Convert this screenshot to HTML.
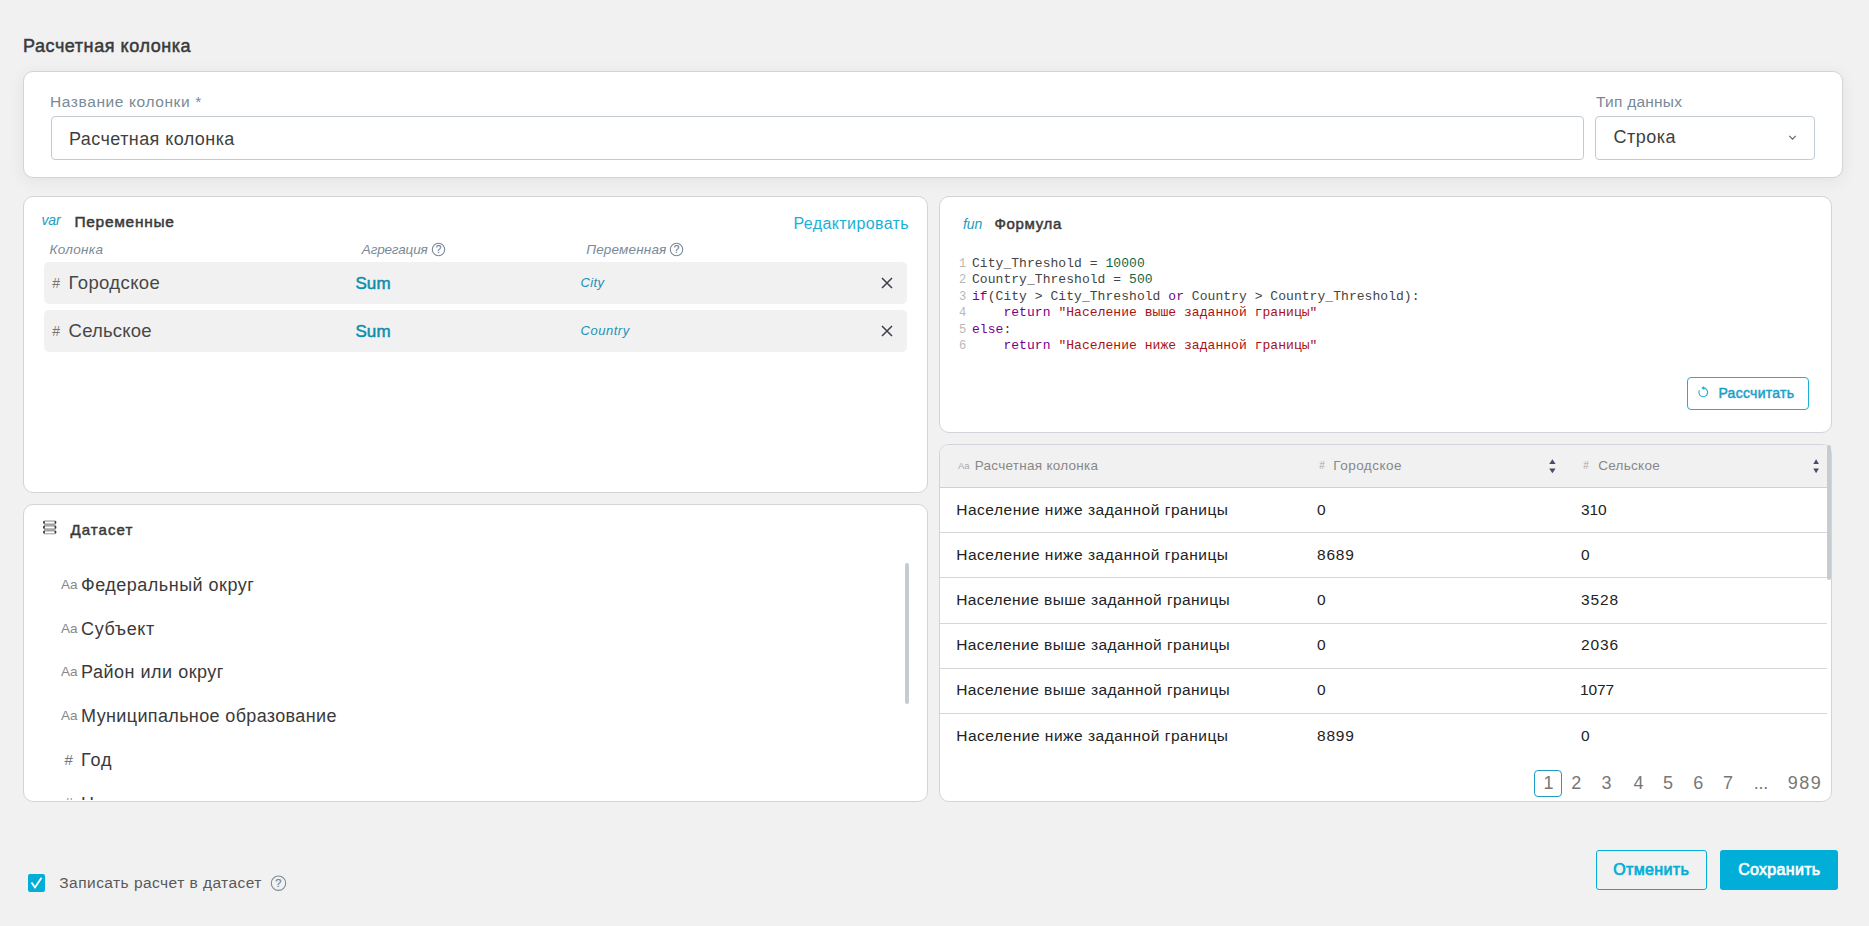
<!DOCTYPE html>
<html><head><meta charset="utf-8">
<style>
*{margin:0;padding:0;box-sizing:border-box}
html,body{width:1869px;height:926px;overflow:hidden;background:#f1f1f1;font-family:"Liberation Sans",sans-serif;color:#333}
.a{position:absolute}
.card{position:absolute;background:#fff;border:1px solid #d2d4d9;border-radius:10px}
.t{position:absolute;white-space:nowrap;line-height:1}
.row{position:absolute;left:44px;width:863px;height:42px;background:#f1f1f1;border-radius:5px}
.sep{position:absolute;left:940px;width:887px;height:1px;background:#d6d7dc}
.code{position:absolute;white-space:pre;line-height:1;font-family:"Liberation Mono",monospace;font-size:13px;color:#444;letter-spacing:.05px}
.ln{position:absolute;left:959px;white-space:pre;line-height:1;font-family:"Liberation Mono",monospace;font-size:12px;color:#b8b8b8}
.k{color:#770088}.n{color:#116644}.s{color:#aa1111}
svg{position:absolute;overflow:visible}
</style></head><body>

<!-- top card -->
<div class="card" style="left:23px;top:71px;width:1820px;height:107px;box-shadow:0 3px 16px rgba(30,40,60,.07)"></div>
<div class="a" style="left:51px;top:116px;width:1533px;height:44px;border:1px solid #c3cbd2;border-radius:4px;background:#fff"></div>
<div class="a" style="left:1595px;top:116px;width:220px;height:44px;border:1px solid #c3cbd2;border-radius:4px;background:#fff"></div>
<svg style="left:0;top:0" width="1" height="1"><path d="M1789.3 135.8 L1792.5 139.2 L1795.7 135.8" fill="none" stroke="#666" stroke-width="1.2"/></svg>

<!-- variables card -->
<div class="card" style="left:23px;top:196px;width:905px;height:297px"></div>
<div class="row" style="top:262px"></div>
<div class="row" style="top:310px"></div>
<svg style="left:0;top:0" width="1" height="1">
 <g fill="none" stroke="#7b8895" stroke-width="1.1">
  <circle cx="438.5" cy="249.5" r="6.2"/>
  <circle cx="676.5" cy="249.5" r="6.2"/>
 </g>
 <g fill="none" stroke="#3d3d4a" stroke-width="1.5">
  <path d="M882 278 L892 288 M892 278 L882 288"/>
  <path d="M882 326 L892 336 M892 326 L882 336"/>
 </g>
</svg>
<div class="t" style="left:435.8px;top:245px;font-size:10px;color:#6f7f8d;-webkit-text-stroke:.2px #6f7f8d">?</div>
<div class="t" style="left:673.8px;top:245px;font-size:10px;color:#6f7f8d;-webkit-text-stroke:.2px #6f7f8d">?</div>

<!-- dataset card -->
<div class="card" style="left:23px;top:504px;width:905px;height:298px;overflow:hidden"></div>
<svg style="left:0;top:0" width="1" height="1">
 <rect x="44" y="520.4" width="11.5" height="13.9" fill="#a4a4a4"/>
 <g fill="#fff"><rect x="44.6" y="521.7" width="10.3" height="1.7"/><rect x="44.6" y="526.6" width="10.3" height="1.7"/><rect x="44.6" y="531.5" width="10.3" height="1.7"/></g>
 <g fill="#3a3a3a"><rect x="43.1" y="520.9" width="1.7" height="2.9" rx=".8"/><rect x="54.6" y="520.9" width="1.7" height="2.9" rx=".8"/>
 <rect x="43.1" y="525.8" width="1.7" height="2.9" rx=".8"/><rect x="54.6" y="525.8" width="1.7" height="2.9" rx=".8"/>
 <rect x="43.1" y="530.7" width="1.7" height="2.9" rx=".8"/><rect x="54.6" y="530.7" width="1.7" height="2.9" rx=".8"/></g>
</svg>
<div class="a" style="left:905px;top:563px;width:4px;height:141px;background:#c6cbd0;border-radius:2px"></div>

<!-- formula card -->
<div class="card" style="left:939px;top:196px;width:893px;height:237px"></div>
<div class="ln" style="top:258px">1</div>
<div class="ln" style="top:274.4px">2</div>
<div class="ln" style="top:290.9px">3</div>
<div class="ln" style="top:307.3px">4</div>
<div class="ln" style="top:323.8px">5</div>
<div class="ln" style="top:340.2px">6</div>
<div class="code" style="left:972px;top:257px">City_Threshold = <span class="n">10000</span></div>
<div class="code" style="left:972px;top:273.4px">Country_Threshold = <span class="n">500</span></div>
<div class="code" style="left:972px;top:289.9px"><span class="k">if</span>(City &gt; City_Threshold <span class="k">or</span> Country &gt; Country_Threshold):</div>
<div class="code" style="left:972px;top:306.3px">    <span class="k">return</span> <span class="s">"Население выше заданной границы"</span></div>
<div class="code" style="left:972px;top:322.8px"><span class="k">else</span>:</div>
<div class="code" style="left:972px;top:339.2px">    <span class="k">return</span> <span class="s">"Население ниже заданной границы"</span></div>
<div class="a" style="left:1687px;top:377px;width:122px;height:33px;border:1px solid #1ab0d8;border-radius:4px"></div>
<svg style="left:0;top:0" width="1" height="1">
 <path d="M1699.4 390.2 A4.4 4.4 0 1 0 1703.4 387.9" fill="none" stroke="#1ab0d8" stroke-width="1.1"/>
 <path d="M1704.2 386 L1701.3 387.9 L1704.2 389.9 Z" fill="#1ab0d8"/>
</svg>

<!-- table card -->
<div class="card" style="left:939px;top:444px;width:893px;height:358px;overflow:hidden">
 <div class="a" style="left:0;top:0;width:887px;height:43px;background:#f1f1f1;border-bottom:1px solid #cfd0d6;border-radius:9px 3px 0 0"></div>
</div>
<div class="sep" style="top:532px"></div>
<div class="sep" style="top:577px"></div>
<div class="sep" style="top:623px"></div>
<div class="sep" style="top:668px"></div>
<div class="sep" style="top:713px"></div>
<div class="a" style="left:1827px;top:445px;width:4px;height:135px;background:#c6cbd0;border-radius:2px"></div>
<svg style="left:0;top:0" width="1" height="1">
 <g fill="#4b4b68">
  <path d="M1549.2 464 L1552.4 459.2 L1555.6 464 Z"/>
  <path d="M1549.2 468.5 L1552.4 473.3 L1555.6 468.5 Z"/>
  <path d="M1813.3 464 L1816.1 459.2 L1818.9 464 Z"/>
  <path d="M1813.3 468.5 L1816.1 473.3 L1818.9 468.5 Z"/>
 </g>
</svg>
<div class="a" style="left:1534px;top:770px;width:28px;height:27px;border:1px solid #1f9bbf;border-radius:4px"></div>

<!-- footer -->
<div class="a" style="left:28px;top:874px;width:17px;height:18px;background:#00aed7;border-radius:2px"></div>
<svg style="left:0;top:0" width="1" height="1"><path d="M31.5 882.5 L35 887.5 L41.5 877.8" fill="none" stroke="#fff" stroke-width="1.8"/></svg>
<svg style="left:0;top:0" width="1" height="1"><circle cx="278.5" cy="883.2" r="7.2" fill="none" stroke="#7b8895" stroke-width="1.1"/></svg>
<div class="t" style="left:275.2px;top:877.5px;font-size:11px;color:#6f7f8d;-webkit-text-stroke:.2px #6f7f8d">?</div>
<div class="a" style="left:1596px;top:850px;width:111px;height:40px;border:1px solid #00aed7;border-radius:3px"></div>
<div class="a" style="left:1720px;top:850px;width:118px;height:40px;background:#00aed7;border-radius:3px"></div>

<div class="t" style="left:23px;top:37px;font-size:18px;color:#3a3a3a;-webkit-text-stroke:0.5px #3a3a3a;letter-spacing:0.562px">Расчетная колонка</div>
<div class="t" style="left:50px;top:94px;font-size:15.5px;color:#788a97;letter-spacing:0.6px">Название колонки *</div>
<div class="t" style="left:69px;top:130px;font-size:18px;color:#3f3f3f;letter-spacing:0.425px">Расчетная колонка</div>
<div class="t" style="left:1596.1px;top:94px;font-size:15.5px;color:#788a97;letter-spacing:0.223px">Тип данных</div>
<div class="t" style="left:1613.5px;top:128px;font-size:18px;color:#3f3f3f;letter-spacing:0.48px">Строка</div>
<div class="t" style="left:41.4px;top:213px;font-size:14px;color:#1a9cc0;font-style:italic;letter-spacing:-0.1px">var</div>
<div class="t" style="left:74.4px;top:214px;font-size:15.5px;color:#3a3a3a;-webkit-text-stroke:0.5px #3a3a3a;letter-spacing:0.711px">Переменные</div>
<div class="t" style="left:793.5px;top:216px;font-size:16px;color:#1ab0d8;letter-spacing:0.383px">Редактировать</div>
<div class="t" style="left:49.4px;top:243px;font-size:13.5px;color:#788a97;font-style:italic;letter-spacing:0.334px">Колонка</div>
<div class="t" style="left:361.8px;top:243px;font-size:13.5px;color:#788a97;font-style:italic;letter-spacing:-0.151px">Агрегация</div>
<div class="t" style="left:586.2px;top:243px;font-size:13.5px;color:#788a97;font-style:italic;letter-spacing:0.178px">Переменная</div>
<div class="t" style="left:52.2px;top:276px;font-size:14px;color:#777">#</div>
<div class="t" style="left:68.6px;top:274px;font-size:18.5px;color:#474747;letter-spacing:0.375px">Городское</div>
<div class="t" style="left:355.4px;top:275px;font-size:17px;color:#0a8fb0;-webkit-text-stroke:0.5px #0a8fb0;letter-spacing:0.1px">Sum</div>
<div class="t" style="left:580.5px;top:276px;font-size:13px;color:#1a93b6;font-style:italic;letter-spacing:0.333px">City</div>
<div class="t" style="left:52.2px;top:324px;font-size:14px;color:#777">#</div>
<div class="t" style="left:68.6px;top:322px;font-size:18.5px;color:#474747;letter-spacing:0.2px">Сельское</div>
<div class="t" style="left:355.4px;top:323px;font-size:17px;color:#0a8fb0;-webkit-text-stroke:0.5px #0a8fb0;letter-spacing:0.1px">Sum</div>
<div class="t" style="left:580.5px;top:324px;font-size:13px;color:#1a93b6;font-style:italic;letter-spacing:0.534px">Country</div>
<div class="t" style="left:963px;top:217px;font-size:14px;color:#1a9cc0;font-style:italic;letter-spacing:-0.1px">fun</div>
<div class="t" style="left:994.5px;top:216px;font-size:15px;color:#3a3a3a;-webkit-text-stroke:0.5px #3a3a3a;letter-spacing:0.667px">Формула</div>
<div class="t" style="left:1718.4px;top:386px;font-size:14px;color:#1a9fc7;-webkit-text-stroke:0.5px #1a9fc7;letter-spacing:0.289px">Рассчитать</div>
<div class="t" style="left:958px;top:461px;font-size:9.5px;color:#aaa">Aa</div>
<div class="t" style="left:974.7px;top:459px;font-size:13.5px;color:#888;letter-spacing:0.275px">Расчетная колонка</div>
<div class="t" style="left:1319.3px;top:461px;font-size:10px;color:#aaa">#</div>
<div class="t" style="left:1333.3px;top:459px;font-size:13.5px;color:#888;letter-spacing:0.475px">Городское</div>
<div class="t" style="left:1583.2px;top:461px;font-size:10px;color:#aaa">#</div>
<div class="t" style="left:1598.2px;top:459px;font-size:13.5px;color:#888;letter-spacing:0.286px">Сельское</div>
<div class="t" style="left:956.2px;top:502px;font-size:15.5px;color:#222;letter-spacing:0.52px">Население ниже заданной границы</div>
<div class="t" style="left:1317px;top:502px;font-size:15.5px;color:#222">0</div>
<div class="t" style="left:1581px;top:502px;font-size:15.5px;color:#222;letter-spacing:-0.1px">310</div>
<div class="t" style="left:956.2px;top:547px;font-size:15.5px;color:#222;letter-spacing:0.52px">Население ниже заданной границы</div>
<div class="t" style="left:1317px;top:547px;font-size:15.5px;color:#222;letter-spacing:0.8px">8689</div>
<div class="t" style="left:1581px;top:547px;font-size:15.5px;color:#222">0</div>
<div class="t" style="left:956.2px;top:592px;font-size:15.5px;color:#222;letter-spacing:0.433px">Население выше заданной границы</div>
<div class="t" style="left:1317px;top:592px;font-size:15.5px;color:#222">0</div>
<div class="t" style="left:1581px;top:592px;font-size:15.5px;color:#222;letter-spacing:0.866px">3528</div>
<div class="t" style="left:956.2px;top:637px;font-size:15.5px;color:#222;letter-spacing:0.433px">Население выше заданной границы</div>
<div class="t" style="left:1317px;top:637px;font-size:15.5px;color:#222">0</div>
<div class="t" style="left:1581px;top:637px;font-size:15.5px;color:#222;letter-spacing:0.866px">2036</div>
<div class="t" style="left:956.2px;top:682px;font-size:15.5px;color:#222;letter-spacing:0.433px">Население выше заданной границы</div>
<div class="t" style="left:1317px;top:682px;font-size:15.5px;color:#222">0</div>
<div class="t" style="left:1580px;top:682px;font-size:15.5px;color:#222;letter-spacing:-0.134px">1077</div>
<div class="t" style="left:956.2px;top:728px;font-size:15.5px;color:#222;letter-spacing:0.52px">Население ниже заданной границы</div>
<div class="t" style="left:1317px;top:728px;font-size:15.5px;color:#222;letter-spacing:0.8px">8899</div>
<div class="t" style="left:1581px;top:728px;font-size:15.5px;color:#222">0</div>
<div class="t" style="left:1543.6px;top:774px;font-size:18px;color:#777">1</div>
<div class="t" style="left:1571.3px;top:774px;font-size:18px;color:#777">2</div>
<div class="t" style="left:1601.6px;top:774px;font-size:18px;color:#777">3</div>
<div class="t" style="left:1633.6px;top:774px;font-size:18px;color:#777">4</div>
<div class="t" style="left:1663px;top:774px;font-size:18px;color:#777">5</div>
<div class="t" style="left:1693.2px;top:774px;font-size:18px;color:#777">6</div>
<div class="t" style="left:1723px;top:774px;font-size:18px;color:#777">7</div>
<div class="t" style="left:1753.7px;top:774px;font-size:18px;color:#777;letter-spacing:-0.2px">...</div>
<div class="t" style="left:1787.7px;top:774px;font-size:18px;color:#777;letter-spacing:1.5px">989</div>
<div class="t" style="left:70.5px;top:522px;font-size:15px;color:#3a3a3a;-webkit-text-stroke:0.5px #3a3a3a;letter-spacing:1.066px">Датасет</div>
<div class="t" style="left:61px;top:578px;font-size:13.5px;color:#888">Aa</div>
<div class="t" style="left:81.1px;top:576px;font-size:18px;color:#3a3a3a;letter-spacing:0.488px">Федеральный округ</div>
<div class="t" style="left:61px;top:622px;font-size:13.5px;color:#888">Aa</div>
<div class="t" style="left:81.1px;top:620px;font-size:18px;color:#3a3a3a;letter-spacing:0.6px">Субъект</div>
<div class="t" style="left:61px;top:665px;font-size:13.5px;color:#888">Aa</div>
<div class="t" style="left:81.1px;top:663px;font-size:18px;color:#3a3a3a;letter-spacing:0.5px">Район или округ</div>
<div class="t" style="left:61px;top:709px;font-size:13.5px;color:#888">Aa</div>
<div class="t" style="left:81.1px;top:707px;font-size:18px;color:#3a3a3a;letter-spacing:0.358px">Муниципальное образование</div>
<div class="t" style="left:64.5px;top:752px;font-size:15px;color:#777">#</div>
<div class="t" style="left:81.1px;top:751px;font-size:18px;color:#3a3a3a;letter-spacing:0.9px">Год</div>
<div class="t" style="left:64.5px;top:795px;font-size:15px;color:#777;clip-path:inset(0 0 10px 0)">#</div>
<div class="t" style="left:81.1px;top:795px;font-size:18px;color:#3a3a3a;clip-path:inset(0 0 13px 0)">Население</div>
<div class="t" style="left:59.3px;top:875px;font-size:15.5px;color:#595959;letter-spacing:0.45px">Записать расчет в датасет</div>
<div class="t" style="left:1613.2px;top:862px;font-size:16px;color:#00aed7;-webkit-text-stroke:0.7px #00aed7;letter-spacing:0.371px">Отменить</div>
<div class="t" style="left:1738.2px;top:862px;font-size:16px;color:#fff;-webkit-text-stroke:0.7px #fff;letter-spacing:0.3px">Сохранить</div>

</body></html>
